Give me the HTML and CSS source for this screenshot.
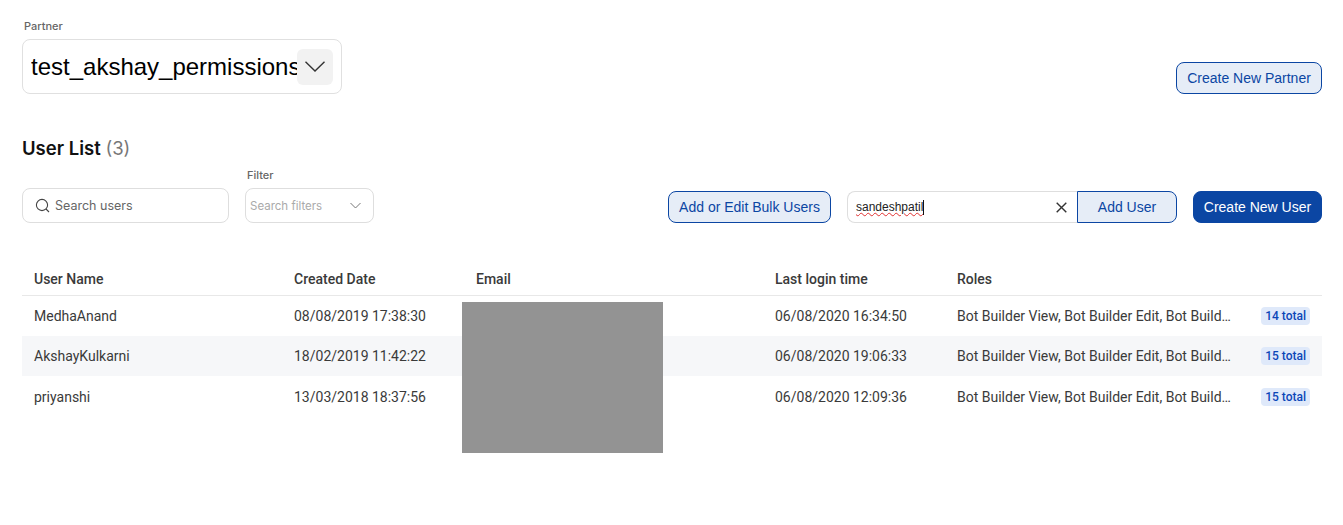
FILE: index.html
```html
<!DOCTYPE html>
<html lang="en">
<head>
  <meta charset="UTF-8">
  <title>User List</title>
  <link rel="stylesheet" href="styles.css">
</head>
<body>
  <div class="page">
    <div class="partner-row">
      <div>
        <div class="field-label partner-label">Partner</div>
        <div class="partner-select">
          <span class="partner-value">test_akshay_permissions</span>
          <span class="partner-arrow">
            <svg width="20" height="11" viewBox="0 0 20 11" fill="none" stroke="#333" stroke-width="1.4"><path d="M0.5 0.8 L10 10 L19.5 0.8"/></svg>
          </span>
        </div>
      </div>
      <button class="btn btn-outline partner-btn">Create New Partner</button>
    </div>

    <h2 class="list-title">User List <span class="list-count">(3)</span></h2>

    <div class="toolbar">
      <div class="search-box">
        <svg width="15" height="15" viewBox="0 0 15 15" fill="none" stroke="#444" stroke-width="1.1"><circle cx="7" cy="7" r="5.6"/><path d="M11 11 L14 14"/></svg>
        <span>Search users</span>
      </div>
      <div class="filter-field">
        <div class="field-label filter-label">Filter</div>
        <div class="filter-select">
          <span>Search filters</span>
          <svg width="11" height="7" viewBox="0 0 11 7" fill="none" stroke="#777" stroke-width="1"><path d="M0.5 1 L5.5 6 L10.5 1"/></svg>
        </div>
      </div>
      <div class="toolbar-actions">
        <button class="btn btn-outline bulk-btn">Add or Edit Bulk Users</button>
        <div class="add-user">
          <div class="add-input">
            <span class="typed">sandeshpatil</span><span class="caret"></span>
            <svg class="clear-icon" width="11" height="11" viewBox="0 0 11 11" fill="none" stroke="#333" stroke-width="1.4"><path d="M0.7 0.7 L10.3 10.3 M10.3 0.7 L0.7 10.3"/></svg>
          </div>
          <button class="btn btn-outline add-btn">Add User</button>
        </div>
        <button class="btn btn-solid create-btn">Create New User</button>
      </div>
    </div>

    <div class="table-wrap">
      <table class="user-table">
        <colgroup>
          <col class="col-name"><col class="col-date"><col class="col-email"><col class="col-login"><col>
        </colgroup>
        <thead>
          <tr><th>User Name</th><th>Created Date</th><th>Email</th><th>Last login time</th><th>Roles</th></tr>
        </thead>
        <tbody>
          <tr>
            <td>MedhaAnand</td><td>08/08/2019 17:38:30</td><td></td><td>06/08/2020 16:34:50</td>
            <td><div class="roles"><span>Bot Builder View, Bot Builder Edit, Bot Build…</span><span class="badge">14 total</span></div></td>
          </tr>
          <tr>
            <td>AkshayKulkarni</td><td>18/02/2019 11:42:22</td><td></td><td>06/08/2020 19:06:33</td>
            <td><div class="roles"><span>Bot Builder View, Bot Builder Edit, Bot Build…</span><span class="badge">15 total</span></div></td>
          </tr>
          <tr>
            <td>priyanshi</td><td>13/03/2018 18:37:56</td><td></td><td>06/08/2020 12:09:36</td>
            <td><div class="roles"><span>Bot Builder View, Bot Builder Edit, Bot Build…</span><span class="badge">15 total</span></div></td>
          </tr>
        </tbody>
      </table>
      <div class="redacted"></div>
    </div>
  </div>
</body>
</html>
```

FILE: styles.css
```css
body {
  margin: 0;
  background: #fff;
  font-family: Inter, "Liberation Sans", sans-serif;
  color: #222;
}
.page {
  padding: 19px 21px 0 22px;
}
.partner-row {
  display: flex;
  justify-content: space-between;
  align-items: flex-end;
}
.field-label {
  font-size: 11px;
  line-height: 14px;
  font-weight: 500;
  color: #666;
}
.partner-label {
  margin: 0 0 6px 2px;
}
.partner-select {
  box-sizing: border-box;
  width: 320px;
  height: 55px;
  display: flex;
  align-items: center;
  padding: 0 8px 0 8px;
  border: 1px solid #e0e0e0;
  border-radius: 8px;
}
.partner-value {
  flex: 1;
  overflow: hidden;
  white-space: nowrap;
  font-family: "Liberation Sans", sans-serif;
  font-size: 24px;
  color: #000;
}
.partner-arrow {
  flex: none;
  width: 36px;
  height: 36px;
  display: flex;
  align-items: center;
  justify-content: center;
  background: #f2f2f2;
  border-radius: 6px;
}
.btn {
  box-sizing: border-box;
  height: 32px;
  padding: 0;
  font-family: "Liberation Sans", sans-serif;
  font-size: 14px;
  border-radius: 8px;
  cursor: pointer;
}
.btn-outline {
  background: #e6edf7;
  border: 1px solid #0b46a3;
  color: #0b46a3;
}
.btn-solid {
  background: #0b46a3;
  border: 1px solid #0b46a3;
  color: #fff;
}
.partner-btn {
  width: 146px;
}
.list-title {
  margin: 42px 0 0;
  font-size: 18.5px;
  line-height: 24px;
  font-weight: 600;
  color: #111;
}
.list-count {
  font-weight: 400;
  color: #777;
}
.toolbar {
  display: flex;
  align-items: flex-end;
  margin-top: 8px;
}
.search-box {
  box-sizing: border-box;
  width: 207px;
  height: 35px;
  display: flex;
  align-items: center;
  gap: 5px;
  padding-left: 12px;
  border: 1px solid #dedede;
  border-radius: 8px;
  font-size: 12.5px;
  color: #666;
}
.filter-field {
  margin-left: 16px;
}
.filter-label {
  margin: 0 0 6px 2px;
}
.filter-select {
  box-sizing: border-box;
  width: 129px;
  height: 35px;
  display: flex;
  align-items: center;
  justify-content: space-between;
  padding: 0 12px 0 4px;
  border: 1px solid #dedede;
  border-radius: 8px;
  font-size: 11.5px;
  color: #aaa;
}
.toolbar-actions {
  margin-left: auto;
  display: flex;
  align-items: center;
}
.bulk-btn {
  width: 163px;
  margin-right: 16px;
}
.add-user {
  display: flex;
  margin-right: 16px;
}
.add-input {
  box-sizing: border-box;
  width: 230px;
  height: 32px;
  display: flex;
  align-items: center;
  padding: 0 10px 0 8px;
  border: 1px solid #dedede;
  border-right: none;
  border-radius: 8px 0 0 8px;
  font-family: "Liberation Sans", sans-serif;
  font-size: 12px;
  color: #222;
}
.typed {
  text-decoration: underline wavy #e03030 1px;
}
.caret {
  width: 1px;
  height: 15px;
  background: #111;
}
.clear-icon {
  margin-left: auto;
}
.add-btn {
  width: 100px;
  border-radius: 0 8px 8px 0;
}
.create-btn {
  width: 129px;
}
.table-wrap {
  position: relative;
  min-height: 190px;
  margin-top: 40px;
}
.user-table {
  width: 100%;
  table-layout: fixed;
  border-collapse: collapse;
  font-family: Roboto, sans-serif;
  font-size: 14px;
  color: #3a3a3a;
}
.col-name { width: 260px; }
.col-date { width: 182px; }
.col-email { width: 299px; }
.col-login { width: 182px; }
.user-table th {
  height: 32px;
  padding: 0 12px;
  text-align: left;
  font-weight: 500;
  border-bottom: 1px solid #e8e8e8;
}
.user-table td {
  height: 40px;
  padding: 0 12px;
  white-space: nowrap;
}
.user-table tbody tr:nth-child(2) {
  background: #f6f7f9;
}
.user-table tbody tr:nth-child(3) td {
  height: 42px;
}
.roles {
  display: flex;
  align-items: center;
  justify-content: space-between;
}
.badge {
  padding: 2px 4px;
  background: #dfe9fa;
  border-radius: 4px;
  font-size: 12px;
  line-height: 14px;
  font-weight: 500;
  color: #0b46b8;
}
.redacted {
  position: absolute;
  left: 440px;
  top: 39px;
  width: 201px;
  height: 151px;
  background: #939393;
}
```
